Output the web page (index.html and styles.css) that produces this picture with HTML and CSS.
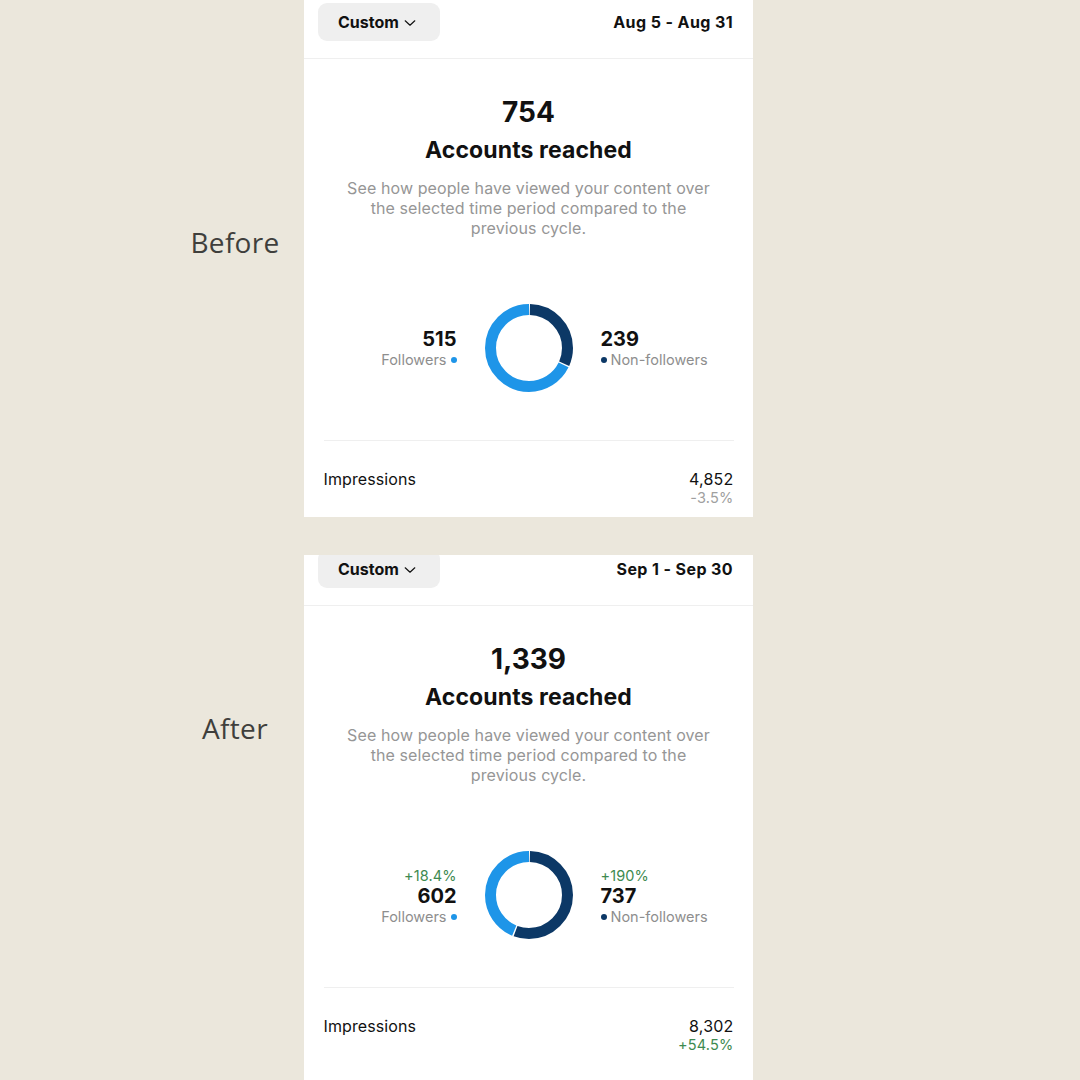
FILE: index.html
```html
<!DOCTYPE html>
<html>
<head>
<meta charset="utf-8">
<link rel="stylesheet" href="styles.css">
</head>
<body>
<div class="page">
  <section class="shot shot-before">
    <div class="side"><span class="tag">Before</span></div>
    <div class="card card-before">
      <div class="inner">
        <div class="header">
          <div class="custom">Custom
            <svg class="chev" width="12" height="8" viewBox="0 0 12 8"><path d="M1.2 1.8 L6 6.2 L10.8 1.8" fill="none" stroke="#111" stroke-width="1.2" stroke-linecap="round" stroke-linejoin="round"/></svg>
          </div>
          <div class="range">Aug 5 - Aug 31</div>
        </div>
        <div class="body">
          <div class="big">754</div>
          <div class="title">Accounts reached</div>
          <p class="desc">See how people have viewed your content over the selected time period compared to the previous cycle.</p>
          <div class="chart">
            <div class="lab lab-left">
              <div class="num">515</div>
              <div class="cap">Followers <span class="dot dot-light"></span></div>
            </div>
            <svg class="donut" width="88" height="88" viewBox="0 0 88 88">
              <circle cx="44" cy="44" r="38.5" fill="none" stroke="#1e95e8" stroke-width="11" stroke-dasharray="164.9 241.9" stroke-dashoffset="-77.9" transform="rotate(-90 44 44)"/>
              <circle cx="44" cy="44" r="38.5" fill="none" stroke="#0c3866" stroke-width="11" stroke-dasharray="75.6 241.9" stroke-dashoffset="-0.9" transform="rotate(-90 44 44)"/>
            </svg>
            <div class="lab lab-right">
              <div class="num">239</div>
              <div class="cap"><span class="dot dot-dark"></span> Non-followers</div>
            </div>
          </div>
          <div class="rule"></div>
          <div class="row">
            <div class="row-name">Impressions</div>
            <div class="row-val">
              <div class="val">4,852</div>
              <div class="pct">-3.5%</div>
            </div>
          </div>
        </div>
      </div>
    </div>
  </section>

  <section class="shot shot-after">
    <div class="side"><span class="tag">After</span></div>
    <div class="card card-after">
      <div class="inner">
        <div class="header">
          <div class="custom">Custom
            <svg class="chev" width="12" height="8" viewBox="0 0 12 8"><path d="M1.2 1.8 L6 6.2 L10.8 1.8" fill="none" stroke="#111" stroke-width="1.2" stroke-linecap="round" stroke-linejoin="round"/></svg>
          </div>
          <div class="range">Sep 1 - Sep 30</div>
        </div>
        <div class="body">
          <div class="big">1,339</div>
          <div class="title">Accounts reached</div>
          <p class="desc">See how people have viewed your content over the selected time period compared to the previous cycle.</p>
          <div class="chart">
            <div class="lab lab-left">
              <div class="up">+18.4%</div>
              <div class="num">602</div>
              <div class="cap">Followers <span class="dot dot-light"></span></div>
            </div>
            <svg class="donut" width="88" height="88" viewBox="0 0 88 88">
              <circle cx="44" cy="44" r="38.5" fill="none" stroke="#1e95e8" stroke-width="11" stroke-dasharray="106.9 241.9" stroke-dashoffset="-135.9" transform="rotate(-90 44 44)"/>
              <circle cx="44" cy="44" r="38.5" fill="none" stroke="#0c3866" stroke-width="11" stroke-dasharray="133.6 241.9" stroke-dashoffset="-0.9" transform="rotate(-90 44 44)"/>
            </svg>
            <div class="lab lab-right">
              <div class="up">+190%</div>
              <div class="num">737</div>
              <div class="cap"><span class="dot dot-dark"></span> Non-followers</div>
            </div>
          </div>
          <div class="rule"></div>
          <div class="row">
            <div class="row-name">Impressions</div>
            <div class="row-val">
              <div class="val">8,302</div>
              <div class="pct pct-up">+54.5%</div>
            </div>
          </div>
        </div>
      </div>
    </div>
  </section>
</div>
</body>
</html>
```

FILE: styles.css
```css
* { box-sizing: border-box; }
html, body {
  margin: 0;
  padding: 0;
  background: #ebe7dc;
}
.page {
  width: 1080px;
  height: 1080px;
  overflow: hidden;
  display: flex;
  flex-direction: column;
  font-family: "Inter", "Liberation Sans", sans-serif;
  color: #111;
}
.shot {
  display: flex;
  align-items: flex-start;
}
.shot-after {
  margin-top: 38px;
}
.side {
  width: 304px;
  flex: none;
}
.tag {
  display: block;
  margin-left: 165px;
  width: 140px;
  text-align: center;
  font-family: "Open Sans", "Liberation Sans", sans-serif;
  font-size: 28px;
  color: #3f3f3c;
  line-height: 36px;
  letter-spacing: 0.3px;
}
.shot-before .side { padding-top: 224px; }
.shot-after .side { padding-top: 155px; }

.card {
  width: 449px;
  background: #fff;
  overflow: hidden;
}
.card-before { height: 517px; }
.card-after { height: 525px; }
.card-after .inner { margin-top: -8px; }

.header {
  height: 59px;
  border-bottom: 1px solid #efefef;
  display: flex;
  justify-content: space-between;
  align-items: center;
  padding: 3px 20px 17px 14px;
}
.custom {
  width: 122px;
  height: 38px;
  background: #efefef;
  border-radius: 9px;
  display: flex;
  align-items: center;
  padding-left: 20px;
  gap: 5px;
  font-size: 16px;
  font-weight: 700;
}
.chev { display: block; margin-top: 1px; }
.range {
  font-size: 16px;
  font-weight: 700;
  letter-spacing: 0.4px;
}

.body {
  display: flex;
  flex-direction: column;
  align-items: center;
  padding-top: 36px;
}
.big {
  font-size: 28px;
  font-weight: 700;
  line-height: 34px;
}
.title {
  margin-top: 6px;
  font-size: 23px;
  font-weight: 700;
  line-height: 30px;
  letter-spacing: 0.1px;
}
.desc {
  margin: 13px 0 0;
  width: 372px;
  text-align: center;
  font-size: 16px;
  line-height: 20px;
  color: #969696;
  letter-spacing: 0.1px;
}
.chart {
  margin-top: 66px;
  width: 100%;
  display: grid;
  grid-template-columns: 1fr 88px 1fr;
  column-gap: 28px;
  align-items: center;
}
.donut { display: block; }
.lab {
  display: flex;
  flex-direction: column;
  padding-top: 3px;
}
.lab-left { align-items: flex-end; }
.lab-right { align-items: flex-start; }
.num {
  font-size: 20px;
  font-weight: 700;
  line-height: 20px;
}
.up {
  font-size: 14.5px;
  line-height: 20px;
  color: #3e8a50;
  letter-spacing: 0.1px;
}
.cap {
  font-size: 14.5px;
  line-height: 21px;
  color: #8e8e8e;
  display: flex;
  align-items: center;
  gap: 4px;
}
.dot {
  width: 6px;
  height: 6px;
  border-radius: 50%;
  display: inline-block;
}
.dot-light { background: #1e95e8; }
.dot-dark { background: #0c3866; }

.rule {
  margin-top: 48px;
  width: 410px;
  height: 1px;
  background: #efefef;
}
.row {
  width: 410px;
  margin-top: 28px;
  display: flex;
  justify-content: space-between;
  align-items: flex-start;
}
.row-name {
  font-size: 16px;
  line-height: 20px;
  letter-spacing: 0.1px;
}
.row-val {
  display: flex;
  flex-direction: column;
  align-items: flex-end;
}
.val {
  font-size: 16px;
  line-height: 20px;
  letter-spacing: 0.2px;
}
.pct {
  font-size: 14.5px;
  line-height: 18px;
  color: #a0a0a0;
  letter-spacing: 0.2px;
}
.pct-up { color: #3e8a50; }
```
